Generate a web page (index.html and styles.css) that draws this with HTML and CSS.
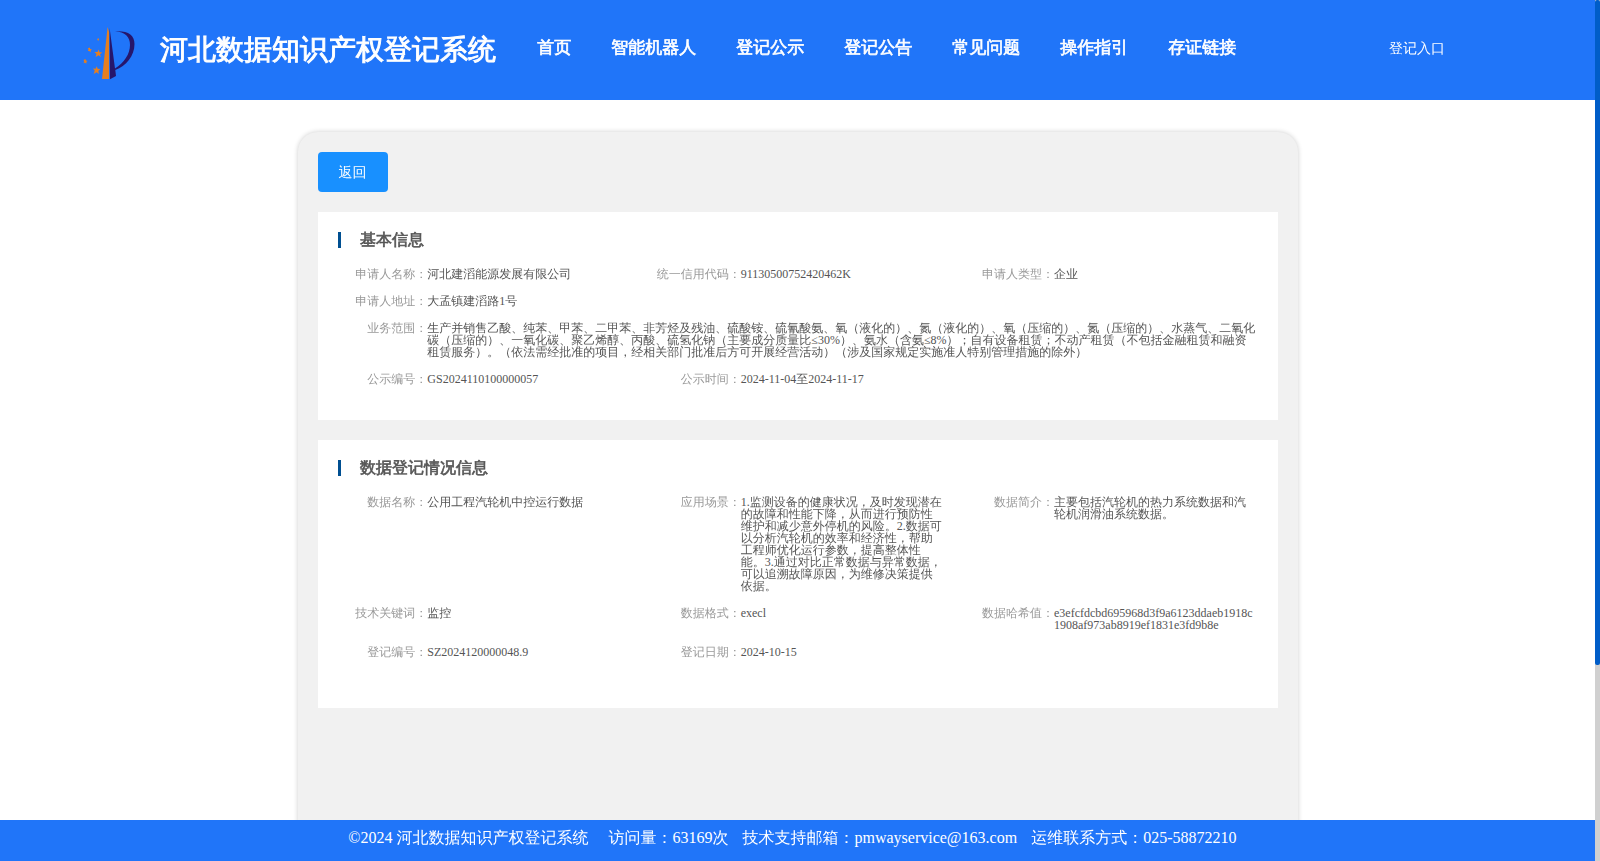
FILE: index.html
```html
<!DOCTYPE html>
<html lang="zh-CN">
<head>
<meta charset="utf-8">
<title>河北数据知识产权登记系统</title>
<link rel="stylesheet" href="styles.css">
</head>
<body>
<div class="page">
  <header class="header">
    <svg class="logo" viewBox="0 0 70 66" width="70" height="66">
      <path class="gold" d="M32.6 7 27 59H34V12Z"/>
      <path class="navy" d="M34.6 8 35 59.3 41 56 40.3 50C51 46 59.5 36 59.5 24 59.5 15 53 10.500 40 11.300 50 12 55 17 55 25 55 34 49 43 40 48.500Z"/>
      <path class="gold" d="M23.500 29.500 24.500 32.300 27.400 32.400 25 34.200 26 37 23.500 35.300 20.600 37 21.500 34 19.400 32.100 22.500 32ZM21.800 46.300 22.600 48.800 25.400 48.900 23.300 51 24 54 21.600 52.200 18.700 53.900 19.700 50.600 17.800 48.500 20.500 48.800ZM14.800 27.500 15.200 29.100 17 29.400 15.600 30.500 15.700 32.200 14.200 31 12.900 31 13.500 29.600 12.800 28.400ZM10.500 39 10.900 40.600 12.500 40.900 11.300 42 11.500 43.800 10 42.700 8.600 43 9.200 41.300 8.500 39.900ZM23.300 18 24 19.600 23.400 20.800 22.300 20 22.500 18.700Z"/>
    </svg>
    <h1 class="site-name">河北数据知识产权登记系统</h1>
    <nav class="nav">
      <a>首页</a><a>智能机器人</a><a>登记公示</a><a>登记公告</a><a>常见问题</a><a>操作指引</a><a>存证链接</a>
    </nav>
    <a class="entry">登记入口</a>
  </header>
  <main class="card">
    <button class="back">返回</button>
    <section class="panel">
      <h2 class="panel-title">基本信息</h2>
      <div class="fields">
        <div class="field"><span class="label">申请人名称：</span><span class="value">河北建滔能源发展有限公司</span></div>
        <div class="field"><span class="label">统一信用代码：</span><span class="value">91130500752420462K</span></div>
        <div class="field"><span class="label">申请人类型：</span><span class="value">企业</span></div>
        <div class="field wide"><span class="label">申请人地址：</span><span class="value">大孟镇建滔路1号</span></div>
        <div class="field wide"><span class="label">业务范围：</span><span class="value">生产并销售乙酸、纯苯、甲苯、二甲苯、非芳烃及残油、硫酸铵、硫氰酸氨、氧（液化的）、氮（液化的）、氧（压缩的）、氮（压缩的）、水蒸气、二氧化碳（压缩的）、一氧化碳、聚乙烯醇、丙酸、硫氢化钠（主要成分质量比≤30%）、氨水（含氨≤8%）；自有设备租赁；不动产租赁（不包括金融租赁和融资租赁服务）。（依法需经批准的项目，经相关部门批准后方可开展经营活动）（涉及国家规定实施准人特别管理措施的除外）</span></div>
        <div class="field"><span class="label">公示编号：</span><span class="value">GS2024110100000057</span></div>
        <div class="field"><span class="label">公示时间：</span><span class="value">2024-11-04至2024-11-17</span></div>
      </div>
    </section>
    <section class="panel panel-data">
      <h2 class="panel-title">数据登记情况信息</h2>
      <div class="fields">
        <div class="field"><span class="label">数据名称：</span><span class="value">公用工程汽轮机中控运行数据</span></div>
        <div class="field"><span class="label">应用场景：</span><span class="value">1.监测设备的健康状况，及时发现潜在的故障和性能下降，从而进行预防性维护和减少意外停机的风险。2.数据可以分析汽轮机的效率和经济性，帮助工程师优化运行参数，提高整体性能。3.通过对比正常数据与异常数据，可以追溯故障原因，为维修决策提供依据。</span></div>
        <div class="field"><span class="label">数据简介：</span><span class="value">主要包括汽轮机的热力系统数据和汽轮机润滑油系统数据。</span></div>
        <div class="field"><span class="label">技术关键词：</span><span class="value">监控</span></div>
        <div class="field"><span class="label">数据格式：</span><span class="value">execl</span></div>
        <div class="field"><span class="label">数据哈希值：</span><span class="value">e3efcfdcbd695968d3f9a6123ddaeb1918c1908af973ab8919ef1831e3fd9b8e</span></div>
        <div class="field"><span class="label">登记编号：</span><span class="value">SZ2024120000048.9</span></div>
        <div class="field"><span class="label">登记日期：</span><span class="value">2024-10-15</span></div>
      </div>
    </section>
  </main>
  <footer class="footer">
    <span class="copyright">©2024 河北数据知识产权登记系统</span><span>访问量：63169次</span><span>技术支持邮箱：pmwayservice@163.com</span><span>运维联系方式：025-58872210</span>
  </footer>
</div>
<div class="scroll-track"><div class="scroll-thumb"></div></div>
</body>
</html>
```
FILE: styles.css
```css
* { box-sizing: border-box; }
body {
  display: flex;
  height: 861px;
  margin: 0;
  overflow: hidden;
  background: #fff;
  font-family: "Liberation Serif", "WenQuanYi Micro Hei", "WenQuanYi Zen Hei", "Droid Sans Fallback", "Noto Sans CJK SC", serif;
}
.page { display: flex; flex-direction: column; width: 1595px; height: 861px; }
.header {
  display: flex;
  flex: none;
  align-items: flex-start;
  height: 100px;
  padding-left: 75px;
  background: #2075f9;
  color: #fff;
}
.logo { flex: none; margin-top: 20px; }
.gold { fill: #e57f20; }
.navy { fill: #26166c; }
.site-name { margin: 30px 0 0 15px; font-size: 28px; line-height: 40px; white-space: nowrap; -webkit-text-stroke: .95px; }
.nav { display: flex; gap: 40px; margin: 38px 0 0 41.300px; font-size: 17px; font-weight: bold; line-height: 20px; white-space: nowrap; -webkit-text-stroke: .65px; }
.entry { margin: 39px 0 0 152.700px; font-size: 14px; line-height: 20px; }
.card {
  flex: 1;
  width: 1000px;
  min-height: 0;
  margin: 32px 0 -20px 298px;
  padding: 20px;
  border-radius: 20px 20px 0 0;
  background: #f1f1f1;
  box-shadow: 0 0 5px rgba(0, 0, 0, .2);
}
.back {
  display: block;
  width: 70px;
  height: 40px;
  margin: 0 0 20px;
  padding: 1px 1px 0 0;
  border: 0;
  border-radius: 4px;
  background: #1890ff;
  color: #fff;
  font-family: inherit;
  font-size: 14px;
  line-height: 39px;
}
.panel { margin-bottom: 20px; padding: 20px 10px 20px 9.330px; background: #fff; }
.panel-data { padding-bottom: 35px; }
.panel-title {
  margin: 0 0 20px 10.670px;
  padding-left: 19px;
  border-left: 3px solid #004f91;
  color: #555;
  font-size: 16px;
  line-height: 16px;
  -webkit-text-stroke: .62px;
}
.fields { display: grid; grid-template-columns: repeat(3, 313.330px); row-gap: 15px; padding-bottom: 15px; font-size: 12px; line-height: 12px; }
.field { display: grid; grid-template-columns: 100px 1fr; padding-right: 10px; }
.wide { grid-column: 1 / -1; }
.label { color: #999; text-align: right; }
.value { color: #555; overflow-wrap: anywhere; }
.footer {
  display: flex;
  flex: none;
  gap: 14px;
  height: 41px;
  padding-left: 348.300px;
  position: relative;
  background: #2075f9;
  color: #fff;
  font-size: 16px;
  line-height: 36px;
  white-space: nowrap;
}
.copyright { margin-right: 6px; }
.scroll-track { width: 5px; height: 861px; background: #d0d0d0; }
.scroll-thumb { height: 665px; border-radius: 2px; background: #005dc8; }
```
